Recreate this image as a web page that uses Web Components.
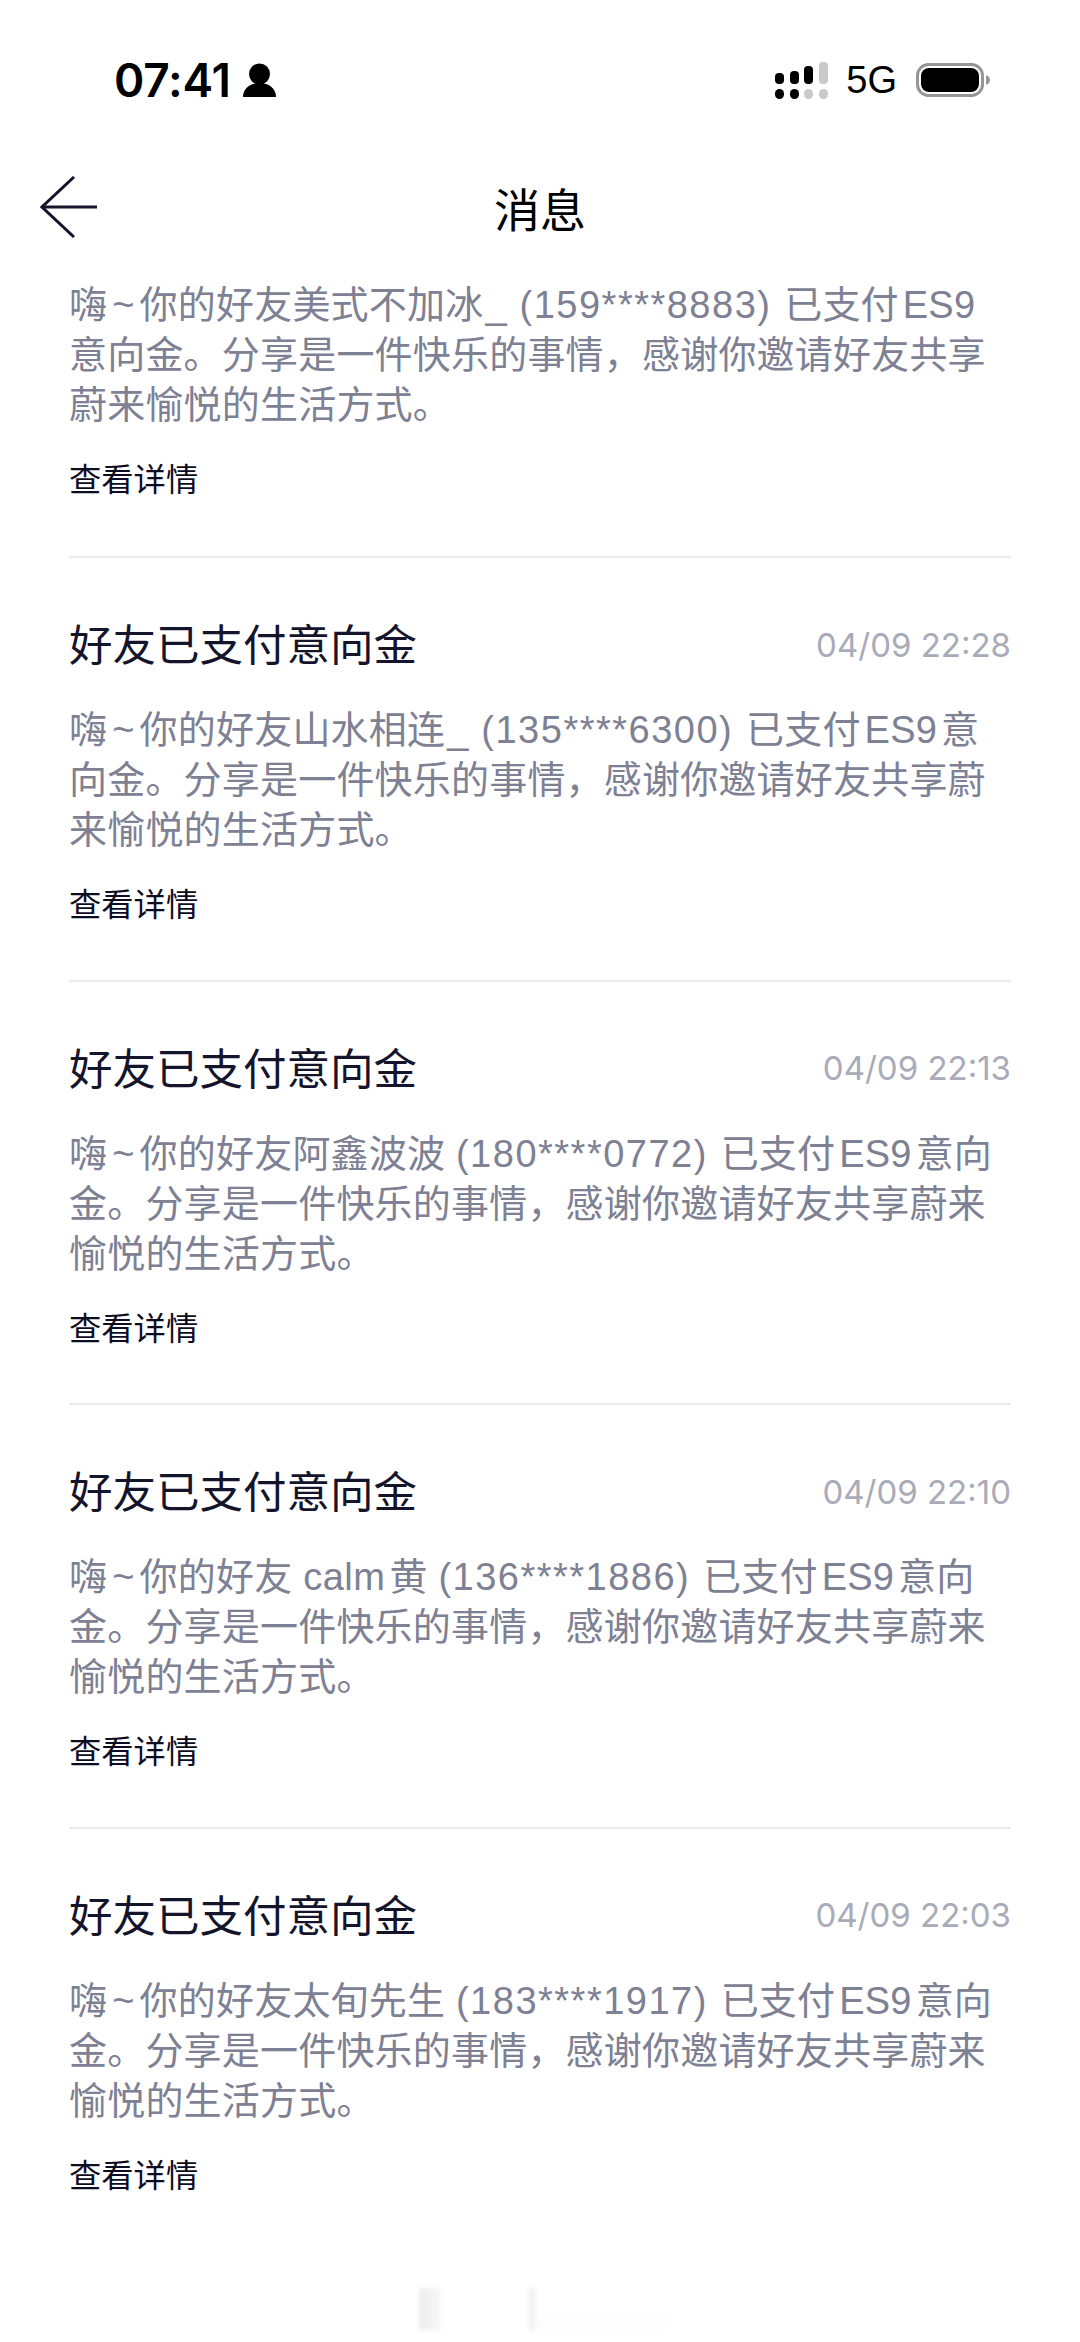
<!DOCTYPE html>
<html lang="zh-CN">
<head>
<meta charset="utf-8">
<title>消息</title>
<style>
  html, body { margin: 0; background: #fff; }
  body {
    width: 1080px;
    height: 2342px;
    overflow: hidden;
    font-family: "Liberation Sans", "Noto Sans CJK SC", sans-serif;
  }
</style>
</head>
<body>
<status-bar></status-bar>
<nav-bar>消息</nav-bar>
<message-list>
  <message-item link="查看详情" first>嗨<span class="t">~</span>你的好友美式不加冰<span class="u">_</span> <span class="n">(159****8883)</span> 已支付<span class="e">ES9</span><br>意向金。分享是一件快乐的事情&#65292;感谢你邀请好友共享<br>蔚来愉悦的生活方式。</message-item>
  <message-item heading="好友已支付意向金" time="04/09 22:28" link="查看详情">嗨<span class="t">~</span>你的好友山水相连<span class="u">_</span> <span class="n">(135****6300)</span> 已支付<span class="e">ES9</span>意<br>向金。分享是一件快乐的事情&#65292;感谢你邀请好友共享蔚<br>来愉悦的生活方式。</message-item>
  <message-item heading="好友已支付意向金" time="04/09 22:13" link="查看详情">嗨<span class="t">~</span>你的好友阿鑫波波 <span class="n">(180****0772)</span> 已支付<span class="e">ES9</span>意向<br>金。分享是一件快乐的事情&#65292;感谢你邀请好友共享蔚来<br>愉悦的生活方式。</message-item>
  <message-item heading="好友已支付意向金" time="04/09 22:10" link="查看详情">嗨<span class="t">~</span>你的好友 <span class="c">calm</span>黄 <span class="n">(136****1886)</span> 已支付<span class="e">ES9</span>意向<br>金。分享是一件快乐的事情&#65292;感谢你邀请好友共享蔚来<br>愉悦的生活方式。</message-item>
  <message-item heading="好友已支付意向金" time="04/09 22:03" link="查看详情" last>嗨<span class="t">~</span>你的好友太旬先生 <span class="n">(183****1917)</span> 已支付<span class="e">ES9</span>意向<br>金。分享是一件快乐的事情&#65292;感谢你邀请好友共享蔚来<br>愉悦的生活方式。</message-item>
</message-list>
<home-ghost></home-ghost>

<script>
class StatusBar extends HTMLElement {
  constructor() {
    super();
    this.attachShadow({ mode: "open" });
  }

  connectedCallback() {
    this.shadowRoot.innerHTML = /* html */`
    <style>
      :host {
        display: flex;
        justify-content: space-between;
        align-items: center;
        box-sizing: border-box;
        height: 160px;
        padding: 0 90px 0 114px;
        color: #000;
      }
      .left, .right { display: flex; align-items: center; }
      .time { font: 600 46px/1 Inter, sans-serif; letter-spacing: -0.2px; }
      .person { margin-left: 12px; }
      .net { font: 400 38px/1 "Liberation Sans", sans-serif; margin: 0 19px 0 18px; }
    </style>
    <div class="left">
      <span class="time">07:41</span>
      <svg class="person" width="33" height="34" viewBox="0 0 33 34">
        <circle cx="16.5" cy="11" r="10.5" fill="#000"/>
        <path d="M0 34c0-8 6.500-14 16.500-14S33 26 33 34z" fill="#000"/>
      </svg>
    </div>
    <div class="right">
      <svg width="53" height="37" viewBox="0 0 53 37">
        <rect x="0" y="11" width="9" height="11" rx="4" fill="#000"/>
        <rect x="15" y="9" width="9" height="13" rx="4" fill="#000"/>
        <rect x="29" y="4" width="9" height="18" rx="4" fill="#000"/>
        <rect x="44" y="0" width="9" height="22" rx="4" fill="#c9c9c9"/>
        <rect x="0" y="27" width="9" height="10" rx="4.5" fill="#000"/>
        <rect x="15" y="27" width="9" height="10" rx="4.5" fill="#000"/>
        <rect x="29" y="27" width="9" height="10" rx="4.5" fill="#c9c9c9"/>
        <rect x="44" y="27" width="9" height="10" rx="4.5" fill="#c9c9c9"/>
      </svg>
      <span class="net">5G</span>
      <svg width="74" height="34" viewBox="0 0 74 34">
        <rect x="1.5" y="1.5" width="65" height="31" rx="11" fill="none" stroke="#969696" stroke-width="3"/>
        <rect x="5" y="5" width="58" height="24" rx="8" fill="#000"/>
        <path d="M70 12c2 .5 4 2.500 4 5s-2 4.500-4 5z" fill="#969696"/>
      </svg>
    </div>`;
  }
}

class NavBar extends HTMLElement {
  constructor() {
    super();
    this.attachShadow({ mode: "open" });
  }

  connectedCallback() {
    this.shadowRoot.innerHTML = /* html */`
    <style>
      :host {
        display: grid;
        grid-template-columns: 1fr auto 1fr;
        align-items: center;
        height: 94px;
        padding-left: 40px;
        padding-right: 40px;
      }
      svg { display: block; }
      .title {
        font: 400 46px/1 "Noto Sans CJK SC", sans-serif;
        color: #000;
      }
    </style>
    <svg width="57" height="62" viewBox="0 0 57 62" fill="none" stroke="#14142b" stroke-width="3">
      <path d="M34 1 2 31l32 30"/>
      <path d="M2 31h55"/>
    </svg>
    <div class="title"><slot></slot></div>
    <span></span>`;
  }
}

class MessageList extends HTMLElement {
  constructor() {
    super();
    this.attachShadow({ mode: "open" });
  }

  connectedCallback() {
    this.shadowRoot.innerHTML = /* html */`
    <style>
      :host { display: block; padding: 26px 69px 0; }
    </style>
    <slot></slot>`;
  }
}

class MessageItem extends HTMLElement {
  constructor() {
    super();
    this.attachShadow({ mode: "open" });
  }

  connectedCallback() {
    const heading = this.getAttribute("heading");
    this.shadowRoot.innerHTML = /* html */`
    <style>
      :host {
        display: block;
        padding: 52px 0 55.5px;
        border-bottom: 2px solid #ececee;
      }
      :host([first]) { padding-top: 0; padding-bottom: 57px; }
      :host([last]) { border-bottom: 0; }
      .head {
        display: flex;
        justify-content: space-between;
        align-items: center;
        height: 70px;
        margin-bottom: 25px;
      }
      h2 {
        margin: 0;
        padding-bottom: 4px;
        font: 400 43.5px/66px "Noto Sans CJK SC", sans-serif;
        color: #14142b;
      }
      time {
        font: 400 33px/1 Inter, sans-serif;
        color: #a9abb8;
      }
      .body {
        font: 400 38px/50px "Liberation Sans", "Noto Sans CJK SC", sans-serif;
        letter-spacing: .2px;
        white-space: nowrap;
        color: #7e8093;
      }
      ::slotted(.t) { margin: 0 5px; }
      ::slotted(.u) { margin: 0 2px; }
      ::slotted(.n) { margin-right: 2px; letter-spacing: 1.5px; }
      ::slotted(.c) { margin-right: 4px; letter-spacing: .5px; }
      ::slotted(.e) { margin: 0 4px; }
      .link {
        margin-top: 25px;
        font: 400 32.3px/44px "Noto Sans CJK SC", sans-serif;
        color: #0d0d22;
      }
    </style>
    ${heading ? `<div class="head"><h2>${heading}</h2><time>${this.getAttribute("time")}</time></div>` : ""}
    <div class="body"><slot></slot></div>
    <div class="link">${this.getAttribute("link")}</div>`;
  }
}

class HomeGhost extends HTMLElement {
  constructor() {
    super();
    this.attachShadow({ mode: "open" });
  }

  connectedCallback() {
    this.shadowRoot.innerHTML = /* html */`
    <style>
      :host {
        display: flex;
        position: absolute;
        left: 419px;
        top: 2288px;
        width: 250px;
        height: 42px;
        filter: blur(2px);
      }
      .a { width: 24px; background: linear-gradient(90deg, #ececec, #f4f4f4 60%, #fbfbfb); }
      .b { width: 6px; margin-left: 86px; background: #f0f0f0; }
      .c { flex: 1; align-self: flex-end; height: 14px; background: #fdfdfd; }
    </style>
    <div class="a"></div><div class="b"></div><div class="c"></div>`;
  }
}

customElements.define("status-bar", StatusBar);
customElements.define("nav-bar", NavBar);
customElements.define("message-list", MessageList);
customElements.define("message-item", MessageItem);
customElements.define("home-ghost", HomeGhost);
</script>
</body>
</html>
